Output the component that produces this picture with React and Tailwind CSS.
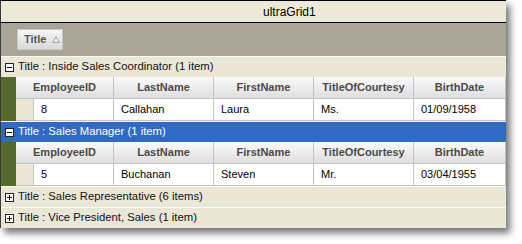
import React from "react";

const cols = [
  { name: "EmployeeID", w: "w-[98px]" },
  { name: "LastName", w: "w-[100px]" },
  { name: "FirstName", w: "w-[100px]" },
  { name: "TitleOfCourtesy", w: "w-[100px]" },
  { name: "BirthDate", w: "w-[92px]" },
];

function Box({ plus }) {
  return (
    <svg width="9" height="9" viewBox="0 0 9 9" className="shrink-0">
      <rect x="0.5" y="0.5" width="8" height="8" fill="#ffffff" stroke="#222" />
      <line x1="2" y1="4.5" x2="7" y2="4.5" stroke="#000" />
      {plus && <line x1="4.5" y1="2" x2="4.5" y2="7" stroke="#000" />}
    </svg>
  );
}

function GroupRow({ text, plus, selected }) {
  return (
    <div
      className={
        "h-[21px] flex items-center border-t " +
        (selected
          ? "bg-[#316ac5] text-white border-[#f5f3ea]"
          : "bg-[#ebe7d7] text-[#111] border-[#fbfaf4]")
      }
    >
      <div className="w-[17px] pl-[4px] flex items-center">
        <Box plus={plus} />
      </div>
      <span className="text-[11.3px] leading-none">{text}</span>
    </div>
  );
}

function Band({ values }) {
  return (
    <div className="flex">
      <div className="w-[16px] bg-[#566a2c]" />
      <div className="flex flex-col">
        <div className="flex h-[22px]">
          {cols.map((c) => (
            <div
              key={c.name}
              className={
                c.w +
                " flex items-center justify-center border-r border-b border-[#c4c4c4] bg-gradient-to-b from-[#fbfbfb] to-[#dedede] text-[11px] font-bold text-[#4a4a4a]"
              }
            >
              {c.name}
            </div>
          ))}
        </div>
        <div className="flex h-[22px]">
          <div className="w-[18px] bg-[#ebe7d7] border-r border-b border-[#c4c4c4]" />
          <div className="w-[80px] flex items-center pl-[7px] border-r border-b border-[#c4c4c4] bg-white text-[11px] text-black">
            {values[0]}
          </div>
          {values.slice(1).map((v, i) => (
            <div
              key={i}
              className={
                cols[i + 1].w +
                " flex items-center pl-[7px] border-r border-b border-[#c4c4c4] bg-white text-[11px] text-black"
              }
            >
              {v}
            </div>
          ))}
        </div>
      </div>
    </div>
  );
}

export default function App() {
  return (
    <div className="w-[522px] h-[244px] bg-white" style={{ fontFamily: '"Liberation Sans", Arial, sans-serif' }}>
      <div className="w-[506px] border-t border-l border-t-black border-l-[#3a3a3a] shadow-[4px_5px_7px_rgba(0,0,0,0.55)]">
        <div className="h-[22px] bg-[#ece9d8] border-b border-black flex items-center pl-[262px] text-[12px] text-black">
          ultraGrid1
        </div>
        <div className="h-[33px] bg-[#a9a699] flex items-center pl-[16px]">
          <div className="w-[46px] h-[21px] border border-[#c9c9c9] bg-gradient-to-b from-[#f5f5f5] to-[#d9d9d9] flex items-center pl-[6px] gap-[6px]">
            <span className="text-[11px] font-bold text-[#555]">Title</span>
            <svg width="8" height="7" viewBox="0 0 8 7">
              <path d="M4 0.8 L7.3 6.3 L0.7 6.3 Z" fill="#fafafa" stroke="#8f8f8f" strokeWidth="0.9" />
            </svg>
          </div>
        </div>
        <GroupRow text="Title : Inside Sales Coordinator (1 item)" />
        <Band values={["8", "Callahan", "Laura", "Ms.", "01/09/1958"]} />
        <GroupRow text="Title : Sales Manager (1 item)" selected />
        <Band values={["5", "Buchanan", "Steven", "Mr.", "03/04/1955"]} />
        <GroupRow text="Title : Sales Representative (6 items)" plus />
        <GroupRow text="Title : Vice President, Sales (1 item)" plus />
      </div>
    </div>
  );
}
